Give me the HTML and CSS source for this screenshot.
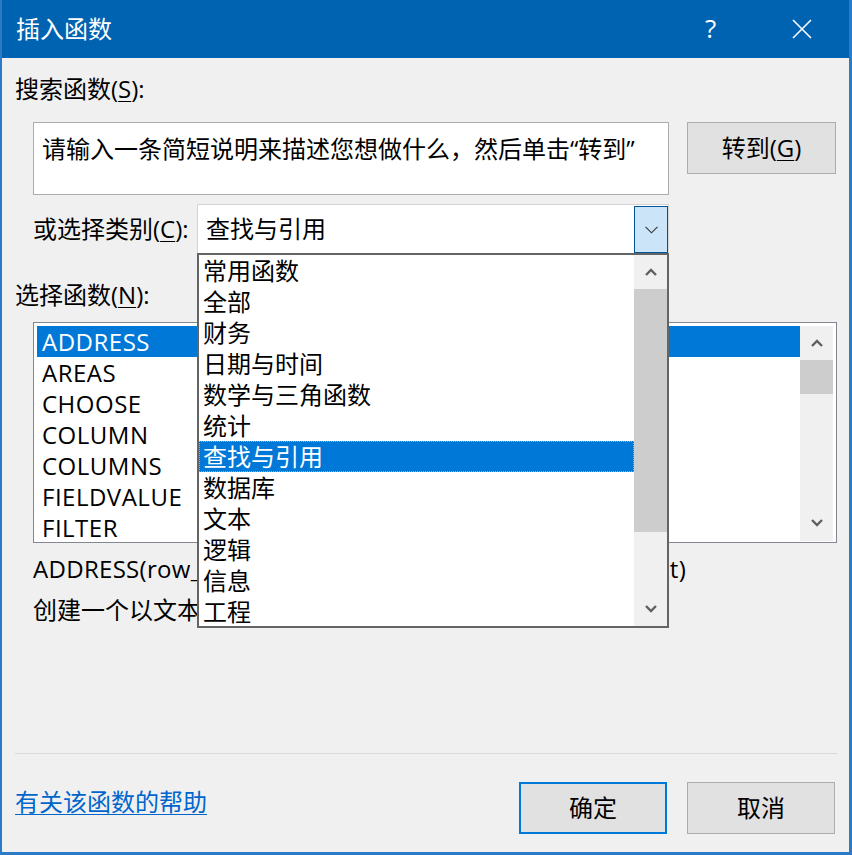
FILE: index.html
```html
<!DOCTYPE html>
<html lang="zh-CN">
<head>
<meta charset="utf-8">
<title>插入函数</title>
<link rel="stylesheet" href="styles.css">
</head>
<body>
<div class="window">
  <div class="titlebar">
    <span class="title">插入函数</span>
    <span class="help">?</span>
    <span class="close"><svg width="20" height="20" viewBox="0 0 20 20"><path d="M1 1 L19 19 M19 1 L1 19" stroke="#fff" stroke-width="1.6" fill="none"/></svg></span>
  </div>
  <div class="content">
    <div class="label">搜索函数(<u>S</u>):</div>
    <div class="search-row">
      <div class="search-box">请输入一条简短说明来描述您想做什么，然后单击“转到”</div>
      <div class="btn btn-go">转到(<u>G</u>)</div>
    </div>
    <div class="cat-row">
      <div class="cat-label">或选择类别(<u>C</u>):</div>
      <div class="combo">
        <div class="combo-value">查找与引用</div>
        <div class="combo-btn"><svg width="13" height="8" viewBox="0 0 13 8"><path d="M0.5 0.8 L6.5 6.8 L12.5 0.8" stroke="#333" stroke-width="1.1" fill="none"/></svg></div>
        <div class="dropdown">
          <ul class="dd-list">
            <li>常用函数</li>
            <li>全部</li>
            <li>财务</li>
            <li>日期与时间</li>
            <li>数学与三角函数</li>
            <li>统计</li>
            <li class="sel focus">查找与引用</li>
            <li>数据库</li>
            <li>文本</li>
            <li>逻辑</li>
            <li>信息</li>
            <li>工程</li>
          </ul>
          <div class="scrollbar">
            <div class="sb-btn"><svg width="12" height="8" viewBox="0 0 12 8"><path d="M1 7 L6 2 L11 7" stroke="#606060" stroke-width="2.4" fill="none"/></svg></div>
            <div class="sb-thumb dd-thumb"></div>
            <div class="sb-track"></div>
            <div class="sb-btn"><svg width="12" height="8" viewBox="0 0 12 8"><path d="M1 1 L6 6 L11 1" stroke="#606060" stroke-width="2.4" fill="none"/></svg></div>
          </div>
        </div>
      </div>
    </div>
    <div class="label label-func">选择函数(<u>N</u>):</div>
    <div class="listbox">
      <ul class="fn-list">
        <li class="sel">ADDRESS</li>
        <li>AREAS</li>
        <li>CHOOSE</li>
        <li>COLUMN</li>
        <li>COLUMNS</li>
        <li>FIELDVALUE</li>
        <li>FILTER</li>
        <li>FORMULATEXT</li>
      </ul>
      <div class="scrollbar">
        <div class="sb-btn"><svg width="12" height="8" viewBox="0 0 12 8"><path d="M1 7 L6 2 L11 7" stroke="#606060" stroke-width="2.4" fill="none"/></svg></div>
        <div class="sb-thumb fn-thumb"></div>
        <div class="sb-track"></div>
        <div class="sb-btn sb-btn-last"><svg width="12" height="8" viewBox="0 0 12 8"><path d="M1 1 L6 6 L11 1" stroke="#606060" stroke-width="2.4" fill="none"/></svg></div>
      </div>
    </div>
    <div class="sig">ADDRESS(row_num,column_num,abs_num,a1,sheet_text)</div>
    <div class="desc">创建一个以文本方式对工作簿中某一单元格进行的引用</div>
    <div class="separator"></div>
    <div class="footer">
      <a class="help-link" href="#">有关该函数的帮助</a>
      <div class="buttons">
        <div class="btn btn-default">确定</div>
        <div class="btn">取消</div>
      </div>
    </div>
  </div>
</div>
</body>
</html>
```

FILE: styles.css
```css
* { box-sizing: border-box; }
html, body { margin: 0; padding: 0; }
body {
  width: 852px;
  height: 855px;
  overflow: hidden;
  background: #f0f0f0;
  font-family: "Open Sans", "Noto Sans CJK SC", sans-serif;
  font-size: 24px;
  color: #000;
}
ul { list-style: none; margin: 0; padding: 0; }
u { text-decoration-thickness: 1px; text-underline-offset: 3px; }

.window {
  width: 852px;
  height: 855px;
  border-style: solid;
  border-color: #2b7bc6;
  border-width: 0 3px 3px 2px;
  display: flex;
  flex-direction: column;
  background: #f0f0f0;
}

.titlebar {
  height: 58px;
  flex: none;
  background: #0063b1;
  color: #fff;
  display: flex;
  align-items: center;
  padding-left: 14px;
}
.title { font-size: 24px; line-height: 32px; }
.help {
  margin-left: auto;
  width: 12px;
  font-size: 26px;
  line-height: 32px;
  margin-right: 75px;
  margin-top: -2px;
}
.close { width: 20px; height: 20px; margin-right: 37px; display: flex; }

.content {
  flex: 1;
  padding-left: 13px;
  display: flex;
  flex-direction: column;
}

.label { line-height: 32px; margin-top: 15px; white-space: nowrap; }
.label-func { margin-top: 25px; }

.search-row {
  margin-top: 17px;
  margin-left: 18px;
  display: flex;
  align-items: flex-start;
  gap: 18px;
}
.search-box {
  width: 636px;
  height: 73px;
  background: #fff;
  border: 1px solid #acacac;
  padding: 10px 0 0 8px;
  line-height: 32px;
  white-space: nowrap;
}
.btn {
  width: 148px;
  height: 52px;
  background: #e1e1e1;
  border: 1px solid #adadad;
  display: flex;
  align-items: center;
  justify-content: center;
  line-height: 32px;
}
.btn-go { width: 149px; }
.btn-default { border: 2px solid #0078d7; }

.cat-row {
  margin-top: 9px;
  margin-left: 18px;
  display: grid;
  grid-template-columns: 164px 472px;
  align-items: center;
}
.cat-label { line-height: 32px; white-space: nowrap; }
.combo {
  position: relative;
  height: 50px;
  background: #fff;
  border: 1px solid #d4d4d4;
  display: flex;
}
.combo-value {
  flex: 1;
  padding-left: 8px;
  line-height: 48px;
}
.combo-btn {
  width: 34px;
  margin: 1px 0 0 0;
  height: 47px;
  background: #cce4f7;
  border: 1px solid #005499;
  display: flex;
  align-items: center;
  justify-content: center;
}

.dropdown {
  position: absolute;
  left: -1px;
  top: 48px;
  width: 472px;
  height: 375px;
  background: #fff;
  border: 2px solid #646464;
  display: flex;
  z-index: 10;
}
.dd-list { flex: 1; }
.dd-list li {
  height: 31px;
  line-height: 31px;
  padding-left: 4px;
  white-space: nowrap;
}
.sel { background: #0078d7; color: #fff; }
.focus { outline: 1px dotted #e8a24a; outline-offset: -1px; }

.scrollbar {
  width: 33px;
  background: #f0f0f0;
  display: flex;
  flex-direction: column;
  flex: none;
}
.sb-btn {
  height: 34px;
  display: flex;
  align-items: center;
  justify-content: center;
  flex: none;
}
.sb-thumb { background: #cdcdcd; flex: none; }
.dd-thumb { height: 243px; }
.fn-thumb { height: 34px; }
.sb-track { flex: 1; }
.sb-btn-last { height: 36px; }

.listbox {
  margin-top: 11px;
  margin-left: 18px;
  width: 804px;
  height: 221px;
  border: 1px solid #828790;
  background: #fff;
  padding: 3px 3px 1px 3px;
  display: flex;
}
.fn-list { flex: 1; overflow: hidden; }
.fn-list li {
  height: 31px;
  line-height: 31px;
  padding-left: 5px;
  letter-spacing: 0.5px;
}

.sig { margin-top: 10px; margin-left: 18px; line-height: 32px; white-space: nowrap; letter-spacing: 0.3px; }
.desc { margin-top: 9px; margin-left: 18px; line-height: 32px; white-space: nowrap; }

.separator {
  margin-top: 127px;
  width: 822px;
  height: 1px;
  background: #dadada;
}

.footer {
  margin-top: 28px;
  display: flex;
  align-items: flex-start;
}
.help-link {
  margin-top: 4px;
  line-height: 32px;
  color: #0066cc;
  text-decoration: underline;
  text-decoration-thickness: 1px;
  text-underline-offset: 3px;
}
.buttons {
  margin-left: auto;
  margin-right: 14px;
  display: flex;
  gap: 20px;
}
```
